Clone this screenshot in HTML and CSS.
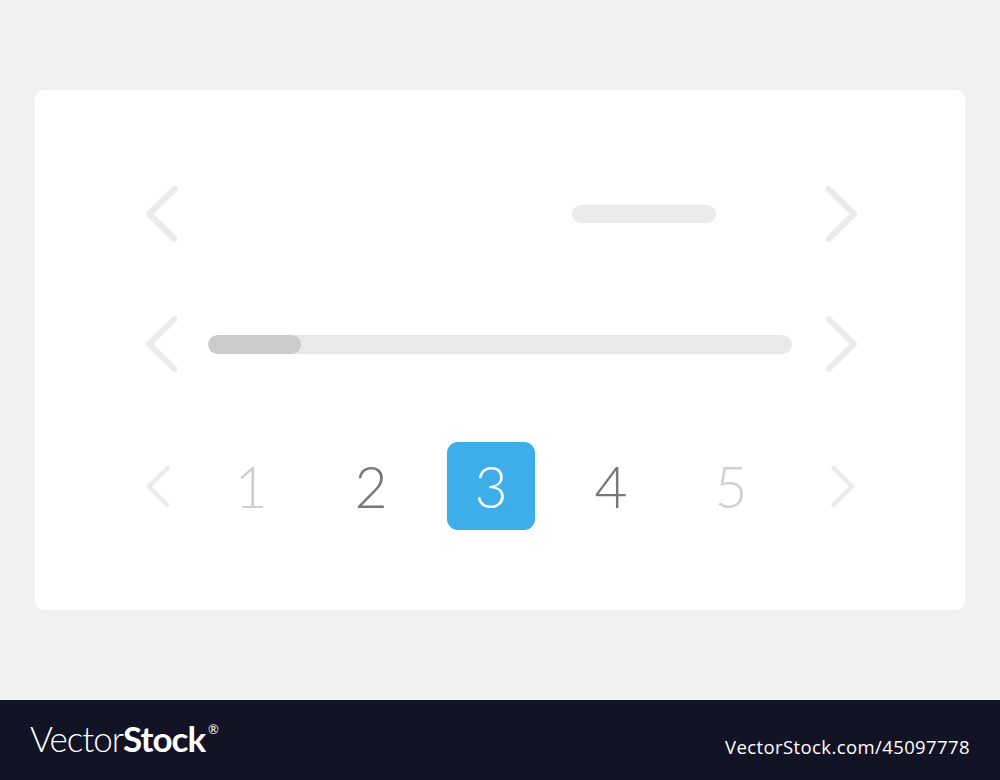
FILE: index.html
```html
<!DOCTYPE html>
<html lang="en">
<head>
  <meta charset="UTF-8">
  <meta name="viewport" content="width=device-width, initial-scale=1.0">
  <title>Sliders and Pagination</title>
  <link rel="stylesheet" href="styles.css">
</head>
<body>
  <main class="stage">
    <div class="card">
      <!-- Carousel with a short indicator -->
      <div class="slider-row">
        <button class="arrow arrow-big" aria-label="Previous">
          <svg width="32" height="56" viewBox="0 0 32 56"><path d="M28.5 3 L3 28 L28.5 53" /></svg>
        </button>
        <div class="slider-middle">
          <div class="pill"></div>
        </div>
        <button class="arrow arrow-big" aria-label="Next">
          <svg width="32" height="56" viewBox="0 0 32 56"><path d="M3.5 3 L29 28 L3.5 53" /></svg>
        </button>
      </div>

      <!-- Carousel with a progress track -->
      <div class="slider-row">
        <button class="arrow arrow-big" aria-label="Previous">
          <svg width="32" height="56" viewBox="0 0 32 56"><path d="M28.5 3 L3 28 L28.5 53" /></svg>
        </button>
        <div class="slider-middle">
          <div class="track">
            <div class="thumb" style="width: 16%"></div>
          </div>
        </div>
        <button class="arrow arrow-big" aria-label="Next">
          <svg width="32" height="56" viewBox="0 0 32 56"><path d="M3.5 3 L29 28 L3.5 53" /></svg>
        </button>
      </div>

      <!-- Numbered pagination -->
      <div class="pager">
        <button class="arrow arrow-small" aria-label="Previous page">
          <svg width="25" height="43" viewBox="0 0 25 43"><path d="M21.5 3 L3 21.5 L21.5 40" /></svg>
        </button>
        <div class="pages">
          <span class="page faded">1</span>
          <span class="page">2</span>
          <span class="page current">3</span>
          <span class="page">4</span>
          <span class="page faded">5</span>
        </div>
        <button class="arrow arrow-small" aria-label="Next page">
          <svg width="25" height="43" viewBox="0 0 25 43"><path d="M3.5 3 L22 21.5 L3.5 40" /></svg>
        </button>
      </div>
    </div>
  </main>

  <footer class="footer">
    <div class="brand">Vector<b>Stock</b><sup>®</sup></div>
    <div class="ref">VectorStock.com/45097778</div>
  </footer>
</body>
</html>
```

FILE: styles.css
```css
body {
  margin: 0;
  background-color: #f1f1f1;
  font-family: Lato, "Open Sans", sans-serif;
}

.stage {
  height: 700px;
  padding-top: 90px;
  box-sizing: border-box;
}

.card {
  width: 930px;
  height: 520px;
  margin-left: 35px;
  box-sizing: border-box;
  padding-top: 96px;
  background-color: #ffffff;
  border-radius: 9px;
}

.arrow {
  border: none;
  background: none;
  padding: 0;
  display: flex;
}

.arrow svg path {
  fill: none;
  stroke: #ebebeb;
  stroke-linecap: round;
  stroke-linejoin: round;
}

.arrow-big svg path {
  stroke-width: 6;
}

.arrow-small svg path {
  stroke-width: 4.5;
}

.slider-row {
  width: 711px;
  margin-left: 111px;
  height: 56px;
  display: grid;
  grid-template-columns: 32px 1fr 32px;
  align-items: center;
  margin-bottom: 74px;
}

.slider-middle {
  padding: 0 33px 0 30px;
}

.pill {
  width: 144px;
  height: 18px;
  margin-left: 364px;
  border-radius: 9px;
  background-color: #ebebeb;
}

.track {
  height: 19px;
  border-radius: 10px;
  background-color: #e9e9e9;
  overflow: hidden;
}

.thumb {
  height: 100%;
  border-radius: 10px;
  background-color: #cbcbcb;
}

.pager {
  margin-top: -4px;
  margin-left: 111px;
  width: 710px;
  height: 88px;
  display: flex;
  align-items: center;
}

.pages {
  display: flex;
  gap: 32px;
  margin: 0 55px 0 36px;
}

.page {
  width: 88px;
  height: 88px;
  border-radius: 11px;
  display: flex;
  align-items: center;
  justify-content: center;
  font-family: Lato, sans-serif;
  font-weight: 300;
  font-size: 57px;
  color: #777777;
}

.page.faded {
  color: #cfcfcf;
}

.page.current {
  background-color: #3daeea;
  color: #ffffff;
}

.footer {
  height: 80px;
  background-color: #121324;
  color: #ffffff;
  display: flex;
  align-items: center;
  justify-content: space-between;
  padding: 0 30px 0 30px;
}

.brand {
  font-family: Lato, sans-serif;
  font-weight: 300;
  font-size: 35px;
  letter-spacing: -1px;
  margin-top: -4px;
}

.brand b {
  font-weight: 700;
}

.brand sup {
  font-size: 13px;
  font-weight: 400;
  vertical-align: 18px;
  margin-left: 3px;
}

.ref {
  font-family: "Open Sans", sans-serif;
  font-size: 18.5px;
  letter-spacing: 0.4px;
  margin-top: 12px;
}
```
